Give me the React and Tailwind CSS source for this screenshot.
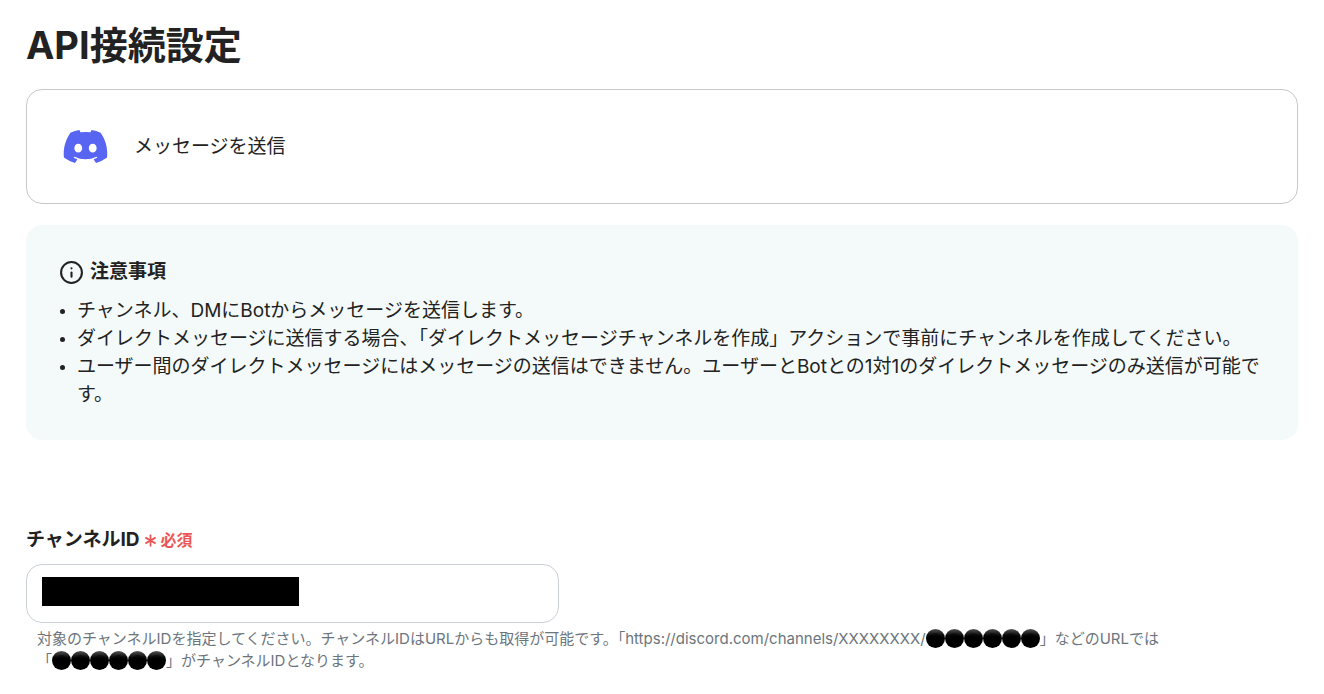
import { Asterisk, Info } from 'lucide-react';

const NOTES = [
  'チャンネル、DMにBotからメッセージを送信します。',
  'ダイレクトメッセージに送信する場合、「ダイレクトメッセージチャンネルを作成」アクションで事前にチャンネルを作成してください。',
  'ユーザー間のダイレクトメッセージにはメッセージの送信はできません。ユーザーとBotとの1対1のダイレクトメッセージのみ送信が可能です。',
];

function DiscordLogo({ className = '' }) {
  return (
    <svg viewBox="0 0 127.14 96.36" fill="#5865F2" className={className} aria-hidden="true">
      <path d="M107.7,8.07A105.15,105.15,0,0,0,81.47,0a72.06,72.06,0,0,0-3.36,6.83A97.68,97.68,0,0,0,49,6.83,72.37,72.37,0,0,0,45.64,0,105.89,105.89,0,0,0,19.39,8.09C2.79,32.65-1.71,56.6.54,80.21h0A105.73,105.73,0,0,0,32.71,96.36,77.7,77.7,0,0,0,39.6,85.25a68.42,68.42,0,0,1-10.85-5.18c.91-.66,1.8-1.34,2.66-2a75.57,75.57,0,0,0,64.32,0c.87.71,1.76,1.39,2.66,2a68.68,68.68,0,0,1-10.87,5.19,77,77,0,0,0,6.89,11.1A105.25,105.25,0,0,0,126.6,80.22h0C129.24,52.84,122.09,29.11,107.7,8.07ZM42.45,65.69C36.18,65.69,31,60,31,53s5-12.74,11.43-12.74S54,46,53.89,53,48.84,65.69,42.45,65.69Zm42.24,0C78.41,65.69,73.25,60,73.25,53s5-12.74,11.44-12.74S96.23,46,96.12,53,91.08,65.69,84.69,65.69Z" />
    </svg>
  );
}

// Glossy black dots standing in for the channel id.
function MaskedId() {
  return (
    <span className="whitespace-nowrap">
      {[...'●●●●●●'].map((dot, i) => (
        <span
          key={i}
          className="inline-block size-[19px] rounded-full bg-gradient-to-b from-[#555] to-black to-50% text-center align-text-bottom leading-[19px] text-black/40"
        >
          {dot}
        </span>
      ))}
    </span>
  );
}

function ActionCard({ label }) {
  return (
    <section className="mt-[19px] flex items-center gap-[26px] rounded-2xl border border-[#c8c8c8] px-9 py-10">
      <DiscordLogo className="h-[33px] w-[45px]" />
      <p className="text-[19px] leading-[33px]">{label}</p>
    </section>
  );
}

function Notice({ title, items }) {
  return (
    <section className="mt-[21px] rounded-2xl bg-[#f4fafa] px-[33px] pt-[33px] pb-[31px]">
      <h2 className="flex items-center gap-[6px] text-[19px] leading-7 font-bold">
        <Info size={25} strokeWidth={2} />
        {title}
      </h2>
      <ul className="mt-[11px] list-disc pl-[18px] text-[19px] leading-7 marker:text-[15px]">
        {items.map((item) => (
          <li key={item}>{item}</li>
        ))}
      </ul>
    </section>
  );
}

function ChannelField() {
  return (
    <div className="mt-[85px]">
      <label htmlFor="channel-id" className="flex items-center text-[19px] leading-[30px] font-bold">
        チャンネルID
        <span className="flex items-center text-base text-[#eb5757]">
          <Asterisk size={21} strokeWidth={2} />
          必須
        </span>
      </label>
      <div className="relative mt-[9px] w-[533px] max-w-full">
        <input
          id="channel-id"
          type="text"
          aria-describedby="channel-id-help"
          className="block h-[59px] w-full rounded-2xl border border-[#cbd0d8] px-4 text-[19px] outline-none"
        />
        <span className="absolute top-[13px] left-4 h-[29px] w-[257px] bg-black" />
      </div>
      <p id="channel-id-help" className="mt-[5px] px-[11px] text-[15px] leading-[22px] text-[#6c757d]">
        対象のチャンネルIDを指定してください。チャンネルIDはURLからも取得が可能です。「https://discord.com/channels/XXXXXXXX/
        <MaskedId />
        」などのURLでは
        <span className="inline-block whitespace-nowrap">
          「
          <MaskedId />
          」
        </span>
        がチャンネルIDとなります。
      </p>
    </div>
  );
}

export default function App() {
  return (
    <main
      lang="ja"
      className="px-[26px] pt-[21px] pb-6 font-['Inter','Noto_Sans_CJK_JP',sans-serif] text-[#222]"
    >
      <h1 className="text-[38px] leading-[49px] font-bold">API接続設定</h1>
      <ActionCard label="メッセージを送信" />
      <Notice title="注意事項" items={NOTES} />
      <ChannelField />
    </main>
  );
}
